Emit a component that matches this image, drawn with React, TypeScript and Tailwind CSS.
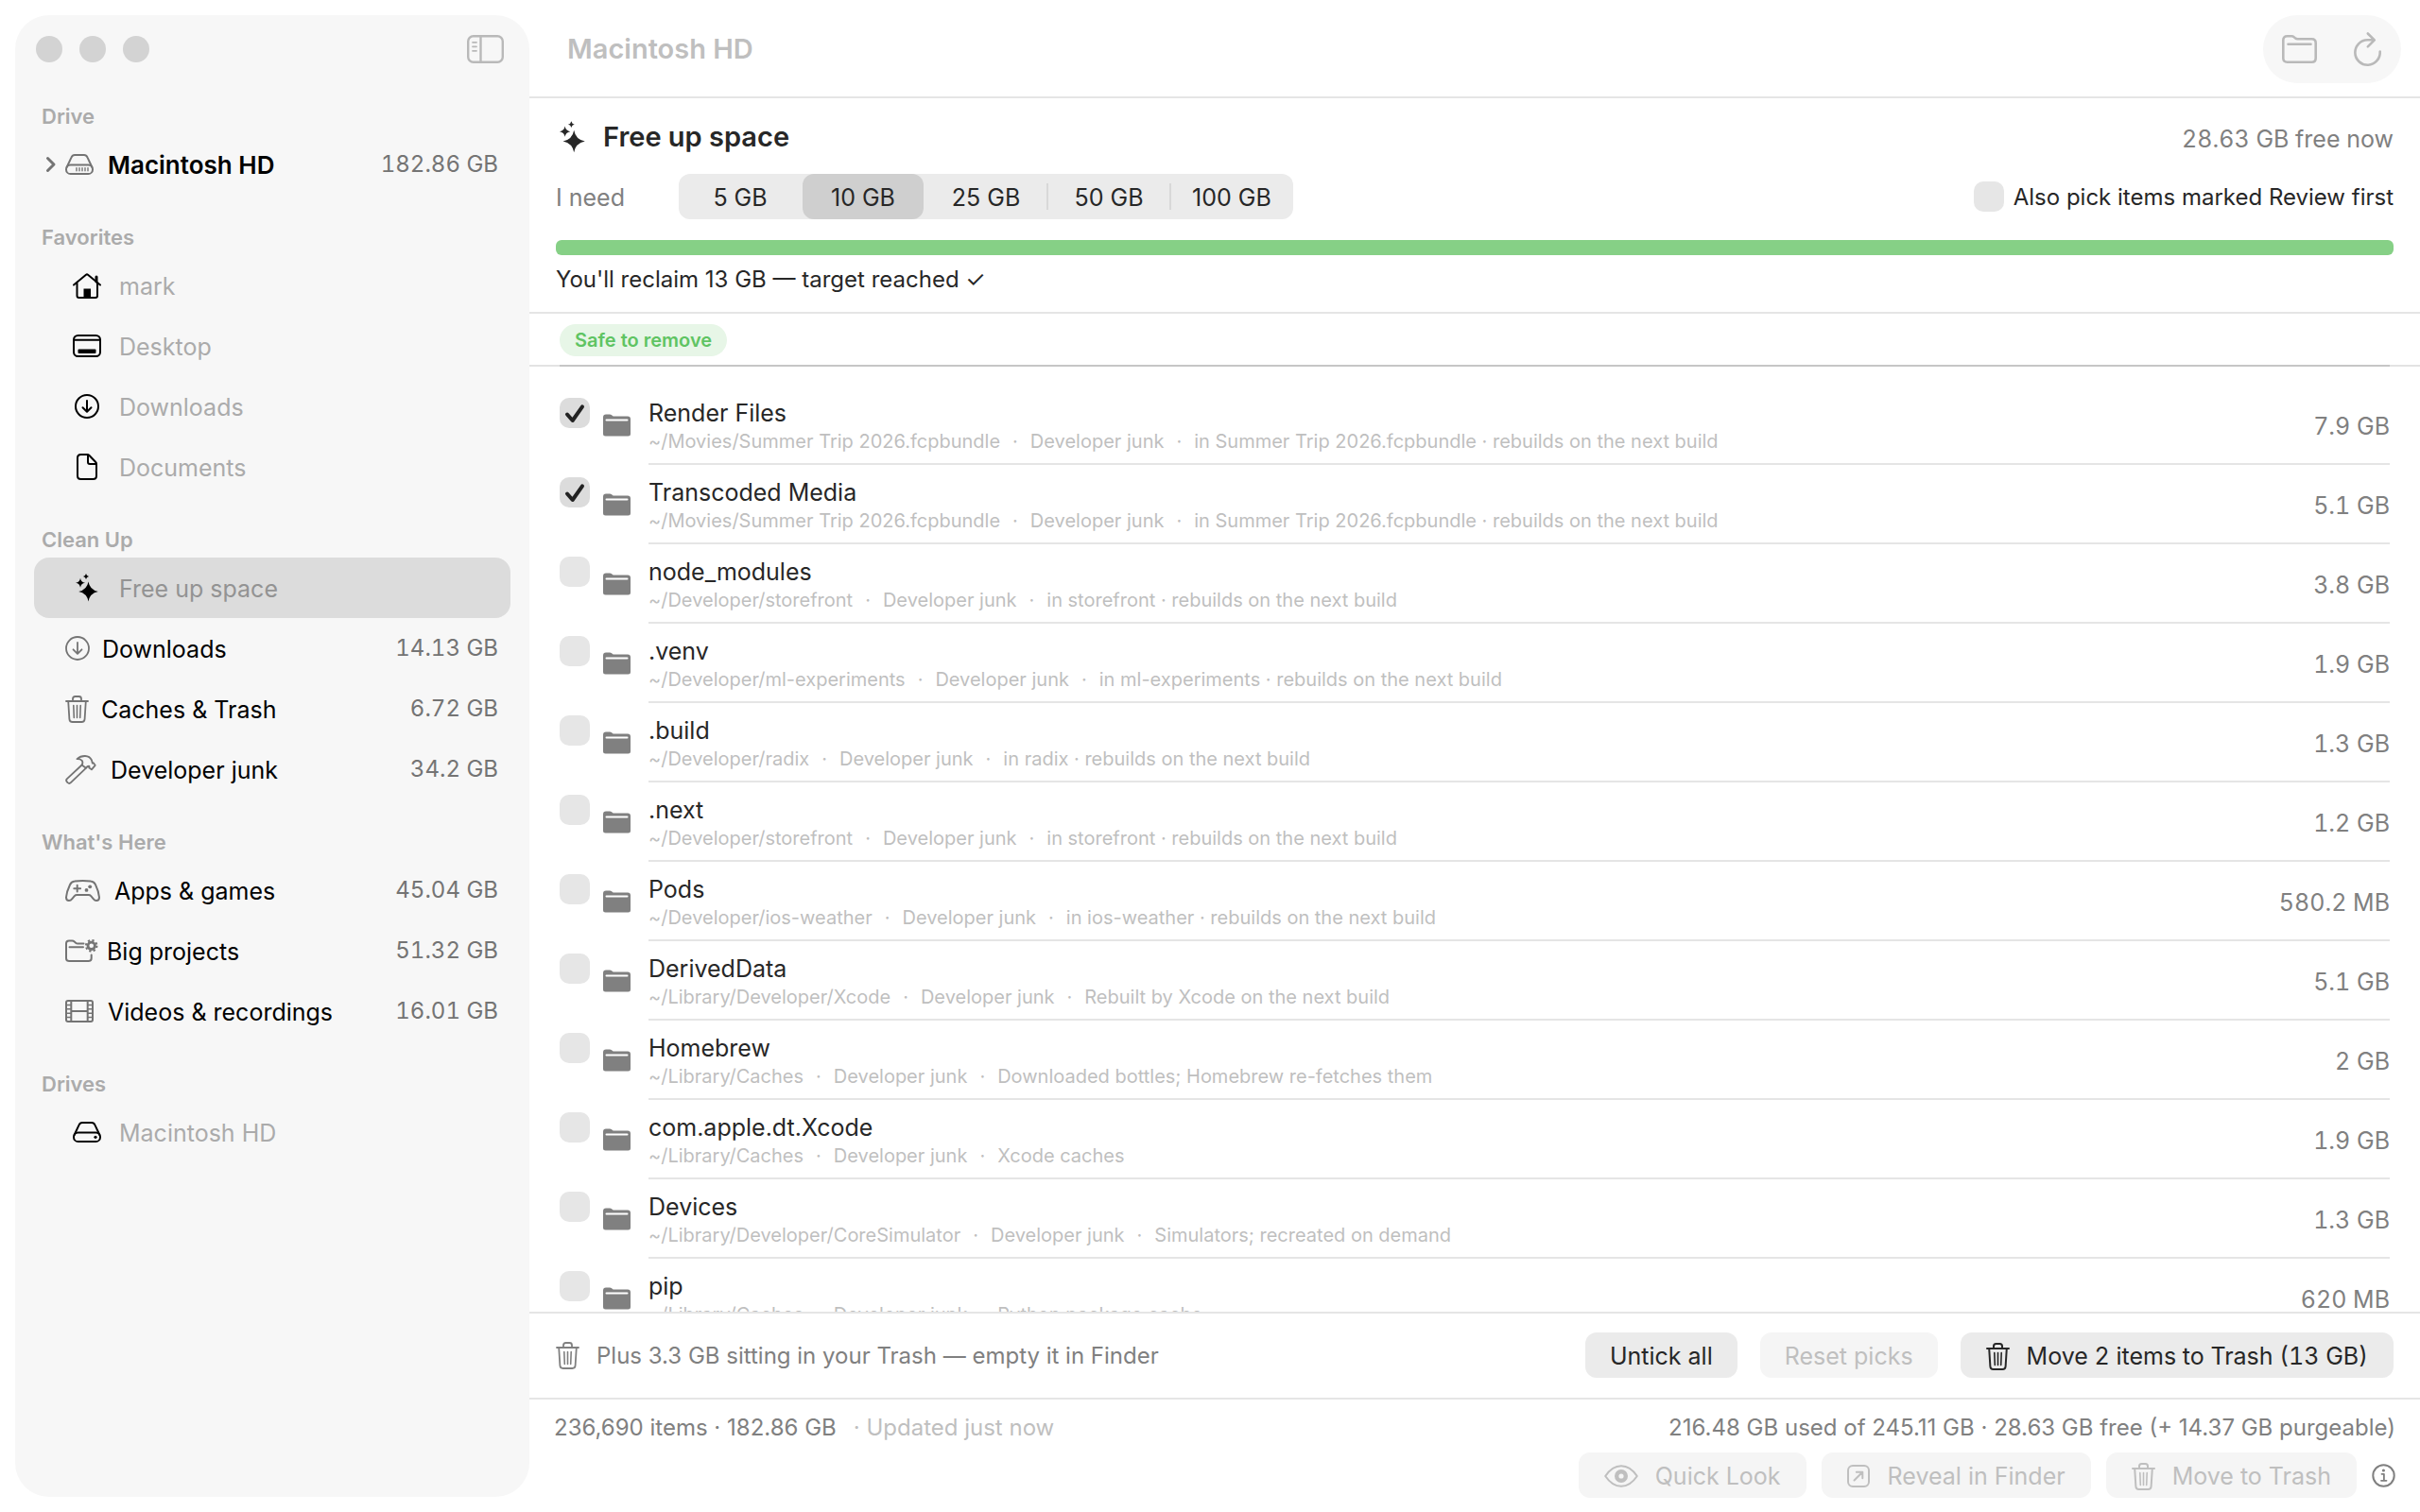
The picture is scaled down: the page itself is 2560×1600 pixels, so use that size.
import { useState } from 'react'
import type { ReactNode } from 'react'
import { clsx } from 'clsx'

type IconProps = { w: number; h: number; sw?: number; className?: string; children: ReactNode }

function Icon({ w, h, sw = 2, className, children }: IconProps) {
  return (
    <svg
      width={w}
      height={h}
      viewBox={`0 0 ${w} ${h}`}
      fill="none"
      stroke="currentColor"
      strokeWidth={sw}
      strokeLinecap="round"
      strokeLinejoin="round"
      aria-hidden="true"
      className={clsx('shrink-0 overflow-visible', className)}
    >
      {children}
    </svg>
  )
}

function DriveIcon({ w, vents = false }: { w: number; vents?: boolean }) {
  return (
    <Icon w={w} h={22}>
      <path d="M1.6 14 6.6 3.4Q7.6 1 10 1h10q2.400 0 3.400 2.400L28.400 14" />
      <rect x="1" y="11.500" width="28" height="9.500" rx="4.600" />
      {vents ? (
        <path d="M12 14.600v3.200M15 14.600v3.200M18 14.600v3.200M21 14.600v3.200M24 14.600v3.200" strokeWidth="1.400" />
      ) : (
        <circle cx="24" cy="16.300" r="1.600" fill="currentColor" stroke="none" />
      )}
    </Icon>
  )
}

function HouseIcon() {
  return (
    <Icon w={30} h={27}>
      <path d="M1 12.500 14 1.800q1-.8 2 0L29 12.500M4.500 10.500V24q0 2 2 2H24q2 0 2-2V10.500" />
      <path d="M25 4v5" strokeWidth="3" />
      <rect x="11.500" y="16.500" width="7.500" height="9.500" fill="currentColor" stroke="none" />
    </Icon>
  )
}

function DesktopIcon() {
  return (
    <Icon w={30} h={24}>
      <rect x="1" y="1" width="28" height="22" rx="4.500" />
      <path d="M1.500 5.800h27" />
      <rect x="5.500" y="15.500" width="19" height="4.500" rx="1" fill="currentColor" stroke="none" />
    </Icon>
  )
}

function DownloadIcon({ sw = 2 }: { sw?: number }) {
  return (
    <Icon w={26} h={26} sw={sw}>
      <circle cx="13" cy="13" r="12" />
      <path d="M13 7v11.500M8.500 14.300 13 18.800l4.500-4.500" />
    </Icon>
  )
}

function DocumentIcon() {
  return (
    <Icon w={22} h={28}>
      <path d="M1 4.500Q1 1 4.500 1h7q1 0 2 1l6.500 6.800q1 1 1 2.200v12.500q0 3.500-3.500 3.500h-13Q1 27 1 23.500zM12 1.500V9q0 2 2 2h6.500" />
    </Icon>
  )
}

function SparklesIcon({ w, h }: { w: number; h: number }) {
  return (
    <svg width={w} height={h} viewBox="0 0 24 30" fill="currentColor" aria-hidden="true" className="shrink-0">
      <path d="M13.500 8.500q1.400 8.600 10.300 10.500-8.900 1.900-10.300 10.500Q12.100 20.900 3.200 19q8.900-1.900 10.300-10.500z" />
      <path d="M5 4.800q.7 4.300 5 5-4.300.7-5 5-.7-4.300-5-5 4.300-.7 5-5zM11 0q.5 2.500 3 3-2.500.5-3 3-.5-2.500-3-3 2.500-.5 3-3z" />
    </svg>
  )
}

function TrashIcon({ sw = 2 }: { sw?: number }) {
  return (
    <Icon w={25} h={29} sw={sw}>
      <path d="M1 6h23M8 5.500V3.500Q8 1 10.500 1h4Q17 1 17 3.500v2M3.200 6l1.200 19q.2 3 3.200 3h9.800q3 0 3.200-3l1.200-19" />
      <path d="m8.800 10.500.5 13M12.500 10.500v13M16.200 10.500l-.5 13" strokeWidth="1.600" />
    </Icon>
  )
}

function HammerIcon() {
  return (
    <Icon w={35} h={31} sw={1.8}>
      <path d="M12.500 4.200Q16 .9 21 1q5 .2 7 4.500l.8 3.200 1-.5 1.900 2.600-3.800 4.500-2.600-1.700.2-1.800q-2-.3-3.600 2L17.600 10.500q1.600-2.400.1-4.700-1.700-1.800-5.200-1.600z" />
      <path d="M17.600 10.500 1.900 25.200q-1.600 1.600 0 3.300l.7.700q1.700 1.600 3.300 0L21.900 13.800" />
    </Icon>
  )
}

function GamepadIcon() {
  return (
    <Icon w={39} h={23}>
      <path d="M10 1.600q8.500-1.200 17 0 3.500.4 5 3.600 3.500 7.300 4 13.300 0 3.500-3 3.500-1.800 0-3.300-1.900l-2.500-3q-1-1.100-2.500-1.100H12.300q-1.500 0-2.500 1.100l-2.500 3Q5.800 22 4 22q-3 0-3-3.500.5-6 4-13.300 1.500-3.200 5-3.600z" />
      <path d="M12.700 5.800v6.800M9.300 9.200h6.800" />
      <g fill="currentColor" stroke="none">
        <circle cx="26.200" cy="7.300" r="1.900" />
        <circle cx="22.500" cy="10.900" r="1.900" />
      </g>
    </Icon>
  )
}

function FolderGearIcon() {
  return (
    <Icon w={31} h={24}>
      <path d="M19.500 4.500h-6.300q-1.200 0-2.100-.8l-1.400-1.300Q8.700 1.500 7.400 1.500H4q-3 0-3 3V20q0 3 3 3h20.700q3 0 3-3v-3.500M4.500 8.300h14.500" />
      <circle cx="27.700" cy="6.800" r="3.700" strokeWidth="2.800" />
      <circle cx="27.700" cy="6.800" r="5.700" strokeWidth="2.200" strokeDasharray="2.238" strokeLinecap="butt" />
    </Icon>
  )
}

function FilmIcon() {
  return (
    <Icon w={32} h={24}>
      <rect x="1" y="1" width="28" height="22" rx="2" />
      <path d="M6.300 1v22M23.700 1v22M6.300 12h17.400" />
      <path d="M1 5.500h5M1 9.800h5M1 14.200h5M1 18.500h5M24 5.500h5M24 9.800h5M24 14.200h5M24 18.500h5" strokeWidth="1.600" />
    </Icon>
  )
}

function FolderIcon() {
  return (
    <svg width="29" height="24" viewBox="0 0 29 24" aria-hidden="true" className="ml-[14px] shrink-0 text-[#808080]">
      <path
        d="M0 3.500Q0 .5 3 .5h4q1.200 0 2.100.8l.9.700q.6.500 1.500.5H26q3 0 3 3V21q0 2.500-2.500 2.500h-24Q0 23.500 0 21z"
        fill="currentColor"
      />
      <rect x="2.500" y="5.500" width="24" height="2" rx="1" fill="#fff" />
    </svg>
  )
}

type CheckboxProps = { id: string; checked: boolean; onChange: () => void; className?: string }

function Checkbox({ id, checked, onChange, className }: CheckboxProps) {
  return (
    <span className={clsx('grid size-8 shrink-0', className)}>
      <input
        id={id}
        type="checkbox"
        checked={checked}
        onChange={onChange}
        className="peer col-start-1 row-start-1 size-8 appearance-none rounded-[10px] bg-[#e6e6e6] checked:bg-[#dcdcdc]"
      />
      <svg
        viewBox="0 0 32 32"
        fill="none"
        stroke="#222"
        strokeWidth="4"
        strokeLinecap="round"
        strokeLinejoin="round"
        aria-hidden="true"
        className="pointer-events-none col-start-1 row-start-1 hidden size-8 peer-checked:block"
      >
        <path d="m8 17.500 5.700 6.500L24 9.300" />
      </svg>
    </span>
  )
}

const FAVORITES = [
  { label: 'mark', icon: <HouseIcon /> },
  { label: 'Desktop', icon: <DesktopIcon /> },
  { label: 'Downloads', icon: <DownloadIcon /> },
  { label: 'Documents', icon: <DocumentIcon /> },
]

const CLEAN_UP = [
  { label: 'Downloads', size: '14.13 GB', icon: <DownloadIcon sw={1.8} /> },
  { label: 'Caches & Trash', size: '6.72 GB', icon: <TrashIcon sw={1.8} /> },
  { label: 'Developer junk', size: '34.2 GB', icon: <HammerIcon /> },
]

const WHATS_HERE = [
  { label: 'Apps & games', size: '45.04 GB', icon: <GamepadIcon /> },
  { label: 'Big projects', size: '51.32 GB', icon: <FolderGearIcon /> },
  { label: 'Videos & recordings', size: '16.01 GB', icon: <FilmIcon /> },
]

const TARGETS = ['5 GB', '10 GB', '25 GB', '50 GB', '100 GB']

const REBUILDS = 'rebuilds on the next build'

const ITEMS = [
  { name: 'Render Files', path: '~/Movies/Summer Trip 2026.fcpbundle', note: `in Summer Trip 2026.fcpbundle · ${REBUILDS}`, size: '7.9 GB' },
  { name: 'Transcoded Media', path: '~/Movies/Summer Trip 2026.fcpbundle', note: `in Summer Trip 2026.fcpbundle · ${REBUILDS}`, size: '5.1 GB' },
  { name: 'node_modules', path: '~/Developer/storefront', note: `in storefront · ${REBUILDS}`, size: '3.8 GB' },
  { name: '.venv', path: '~/Developer/ml-experiments', note: `in ml-experiments · ${REBUILDS}`, size: '1.9 GB' },
  { name: '.build', path: '~/Developer/radix', note: `in radix · ${REBUILDS}`, size: '1.3 GB' },
  { name: '.next', path: '~/Developer/storefront', note: `in storefront · ${REBUILDS}`, size: '1.2 GB' },
  { name: 'Pods', path: '~/Developer/ios-weather', note: `in ios-weather · ${REBUILDS}`, size: '580.2 MB' },
  { name: 'DerivedData', path: '~/Library/Developer/Xcode', note: 'Rebuilt by Xcode on the next build', size: '5.1 GB' },
  { name: 'Homebrew', path: '~/Library/Caches', note: 'Downloaded bottles; Homebrew re-fetches them', size: '2 GB' },
  { name: 'com.apple.dt.Xcode', path: '~/Library/Caches', note: 'Xcode caches', size: '1.9 GB' },
  { name: 'Devices', path: '~/Library/Developer/CoreSimulator', note: 'Simulators; recreated on demand', size: '1.3 GB' },
  { name: 'pip', path: '~/Library/Caches', note: 'Python package cache', size: '620 MB' },
]

function SectionTitle({ children }: { children: ReactNode }) {
  return (
    <h2 className="flex h-16 items-end pb-[5px] pl-2 text-[22px] leading-7 font-semibold text-[#ababab]">{children}</h2>
  )
}

function PlaceRow({ label, icon, selected = false }: { label: string; icon: ReactNode; selected?: boolean }) {
  return (
    <a
      href="#"
      className={clsx(
        'flex h-16 items-center gap-[19px] rounded-2xl pl-[41px] text-black',
        selected && 'bg-[#dcdcdc]',
      )}
    >
      <span className="flex w-[30px] justify-center">{icon}</span>
      <span className={clsx('pt-0.5', selected ? 'text-[#939393]' : 'text-[#ababab]')}>{label}</span>
    </a>
  )
}

function CategoryRow({ label, icon, size }: { label: string; icon: ReactNode; size: string }) {
  return (
    <a href="#" className="flex h-16 items-center gap-[13px] pr-[13px] pl-[33px] text-[#747474]">
      {icon}
      <span className="pt-0.5 text-black">{label}</span>
      <span className="ml-auto text-[24px] tabular-nums">{size}</span>
    </a>
  )
}

function Sidebar() {
  return (
    <aside className="my-4 ml-4 w-[544px] shrink-0 rounded-[36px] bg-[#f7f7f7]">
      <div className="h-[62px] pt-[21px] pr-[27px] pl-[22px]">
        <div className="flex h-[30px] items-center gap-[18px]">
          <button aria-label="Close" className="size-7 rounded-full bg-[#d3d3d3]" />
          <button aria-label="Minimize" className="size-7 rounded-full bg-[#d3d3d3]" />
          <button aria-label="Zoom" className="size-7 rounded-full bg-[#d3d3d3]" />
          <button aria-label="Toggle sidebar" className="ml-auto text-[#b9b9b9]">
            <Icon w={39} h={30} sw={2.4}>
              <rect x="1.200" y="1.200" width="36.600" height="27.600" rx="5.500" />
              <path d="M14.500 1.500v27" />
              <path d="M6 7.800h4M6 12.300h4M6 16.800h4" strokeWidth="1.800" />
            </Icon>
          </button>
        </div>
      </div>

      <nav className="px-5">
        <SectionTitle>Drive</SectionTitle>
        <a href="#" className="flex h-16 items-center pr-[13px] pl-[13px] text-[#747474]">
          <Icon w={10} h={16} sw={3} className="mr-[10px]">
            <path d="m1.500 1.500 6.500 6.500-6.500 6.500" />
          </Icon>
          <DriveIcon w={32} vents />
          <span className="ml-[13px] pt-0.5 text-[26px] font-semibold text-black">Macintosh HD</span>
          <span className="ml-auto text-[24px] tabular-nums">182.86 GB</span>
        </a>

        <SectionTitle>Favorites</SectionTitle>
        {FAVORITES.map((f) => (
          <PlaceRow key={f.label} label={f.label} icon={f.icon} />
        ))}

        <SectionTitle>Clean Up</SectionTitle>
        <PlaceRow label="Free up space" icon={<SparklesIcon w={24} h={30} />} selected />
        {CLEAN_UP.map((c) => (
          <CategoryRow key={c.label} label={c.label} icon={c.icon} size={c.size} />
        ))}

        <SectionTitle>What's Here</SectionTitle>
        {WHATS_HERE.map((c) => (
          <CategoryRow key={c.label} label={c.label} icon={c.icon} size={c.size} />
        ))}

        <SectionTitle>Drives</SectionTitle>
        <PlaceRow label="Macintosh HD" icon={<DriveIcon w={30} />} />
      </nav>
    </aside>
  )
}

function Toolbar() {
  return (
    <header className="flex h-[104px] shrink-0 items-center justify-between border-b-2 border-[#e5e5e5] pt-0.5 pr-5 pl-10">
      <h1 className="text-[29px] font-semibold text-[#bfbfbf]">Macintosh HD</h1>
      <div className="flex h-[72px] items-center gap-[39px] rounded-full bg-[#f7f7f7] px-5 text-[#b9b9b9]">
        <button aria-label="Open folder">
          <Icon w={37} h={30} sw={2.6}>
            <path d="M1.300 5.500q0-4.200 4.200-4.200h4.600q1.600 0 2.800 1.100l1 .9q1.200 1 2.800 1h14.800q4.200 0 4.200 4.200v16q0 4.200-4.200 4.200h-26q-4.200 0-4.200-4.200zM6.500 9.700h24" />
          </Icon>
        </button>
        <button aria-label="Rescan">
          <Icon w={30} h={36} sw={2.6}>
            <path d="M27.700 20.500A13.200 13.200 0 1 1 14.500 8.300h7M14.800 1.500l7 6.900-7 7" />
          </Icon>
        </button>
      </div>
    </header>
  )
}

function TargetPicker() {
  const [target, setTarget] = useState('10 GB')
  const [review, setReview] = useState(false)
  const selectedIndex = TARGETS.indexOf(target)

  return (
    <section className="border-b-2 border-[#e5e5e5] px-7 pt-[23px] pb-[18px]">
      <div className="flex items-center gap-[19px] pl-1">
        <SparklesIcon w={27} h={34} />
        <h2 className="text-[29px] leading-9 font-semibold">Free up space</h2>
        <span className="mt-1 ml-auto tabular-nums text-[#808080]">28.63 GB free now</span>
      </div>

      <div className="mt-[21px] flex h-12 items-center">
        <span className="w-[130px] pt-0.5 text-[#808080]">I need</span>
        <div role="group" aria-label="I need" className="flex items-center rounded-xl bg-[#ebebeb] px-px">
          {TARGETS.map((t, i) => (
            <div key={t} className="flex items-center">
              {i > 0 && (
                <span
                  className={clsx(
                    'h-7 w-[2px]',
                    i !== selectedIndex && i !== selectedIndex + 1 && 'bg-[#d8d8d8]',
                  )}
                />
              )}
              <button
                aria-pressed={t === target}
                onClick={() => setTarget(t)}
                className={clsx('h-12 w-32 rounded-xl pt-0.5', t === target && 'bg-[#cfcfcf]')}
              >
                {t}
              </button>
            </div>
          ))}
        </div>
        <div className="ml-auto flex items-center gap-[10px]">
          <Checkbox id="review" checked={review} onChange={() => setReview(!review)} />
          <label htmlFor="review" className="pt-0.5 text-[24px]">
            Also pick items marked Review first
          </label>
        </div>
      </div>

      <div className="mt-[22px] h-4 rounded-md bg-[#86d086]" />
      <p className="mt-[10px] text-[24px] leading-8">You'll reclaim 13 GB — target reached ✓</p>
    </section>
  )
}

function ItemList() {
  const [picked, setPicked] = useState<string[]>(['Render Files', 'Transcoded Media'])

  function toggle(name: string) {
    setPicked((p) => (p.includes(name) ? p.filter((n) => n !== name) : [...p, name]))
  }

  return (
    <>
      <div className="shrink-0 border-b-2 border-[#e3e3e3]">
        <div className="mx-8 -mb-[2px] flex h-14 items-center border-b-2 border-[#c6c6c6] pt-0.5">
          <h3 className="rounded-full bg-[#e7f6e7] px-4 text-[20px] leading-[34px] font-semibold text-[#5fc463]">
            Safe to remove
          </h3>
        </div>
      </div>
      <ul className="min-h-0 flex-1 overflow-hidden px-8 pt-5">
        {ITEMS.map((item) => (
          <li key={item.name} className="flex h-[84px] items-center">
            <Checkbox
              id={item.name}
              checked={picked.includes(item.name)}
              onChange={() => toggle(item.name)}
              className="mt-[13px] self-start"
            />
            <FolderIcon />
            <div className="ml-[19px] flex h-full flex-1 items-center justify-between border-b-2 border-[#e5e5e5] pt-[3px]">
              <div>
                <label htmlFor={item.name} className="block leading-8">
                  {item.name}
                </label>
                <p className="flex gap-[13px] text-[20px] leading-7 text-[#bfbfbf]">
                  <span>{item.path}</span>
                  <span>·</span>
                  <span>Developer junk</span>
                  <span>·</span>
                  <span>{item.note}</span>
                </p>
              </div>
              <span className="tabular-nums text-[#808080]">{item.size}</span>
            </div>
          </li>
        ))}
      </ul>
    </>
  )
}

function ActionBar() {
  return (
    <div className="flex shrink-0 items-center gap-6 border-t-2 border-[#e5e5e5] px-7 pt-5 pb-[21px]">
      <div className="mr-auto flex items-center gap-[18px] text-[24px] text-[#808080]">
        <TrashIcon sw={1.8} />
        <span className="pt-0.5">Plus 3.3 GB sitting in your Trash — empty it in Finder</span>
      </div>
      <button className="h-12 rounded-xl bg-[#ebebeb] px-[26px] pt-0.5">Untick all</button>
      <button disabled className="h-12 rounded-xl bg-[#f5f5f5] px-[26px] pt-0.5 text-[#bfbfbf]">
        Reset picks
      </button>
      <button className="flex h-12 items-center gap-[18px] rounded-xl bg-[#ebebeb] px-[27px] pt-0.5">
        <TrashIcon />
        <span className="tabular-nums">Move 2 items to Trash (13 GB)</span>
      </button>
    </div>
  )
}

function StatusBar() {
  return (
    <footer className="shrink-0 border-t-2 border-[#e5e5e5] px-[26px] pt-[14px] pb-[15px] text-[#808080]">
      <div className="flex text-[24px] leading-8">
        <span>236,690 items · 182.86 GB</span>
        <span className="ml-[18px] text-[#bfbfbf]">· Updated just now</span>
        <span className="ml-auto">216.48 GB used of 245.11 GB · 28.63 GB free (+ 14.37 GB purgeable)</span>
      </div>
      <div className="mt-[10px] flex items-center justify-end gap-4">
        <button disabled className="flex h-12 items-center gap-[18px] rounded-xl bg-[#f5f5f5] px-[27px] pt-0.5 text-[#bfbfbf]">
          <Icon w={36} h={24}>
            <path d="M1.200 12Q8.500 1.200 18 1.200T34.800 12Q27.500 22.800 18 22.800T1.200 12z" />
            <circle cx="18" cy="12" r="4.800" strokeWidth="4.400" />
          </Icon>
          Quick Look
        </button>
        <button disabled className="flex h-12 items-center gap-[18px] rounded-xl bg-[#f5f5f5] px-[27px] pt-0.5 text-[#bfbfbf]">
          <Icon w={25} h={24}>
            <rect x="1" y="1" width="22" height="22" rx="5" />
            <path d="M7.500 16.500 16 8M9.800 7.700h6.500v6.500" />
          </Icon>
          Reveal in Finder
        </button>
        <button disabled className="flex h-12 items-center gap-[18px] rounded-xl bg-[#f5f5f5] px-[27px] pt-0.5 text-[#bfbfbf]">
          <TrashIcon />
          Move to Trash
        </button>
        <button aria-label="Info">
          <Icon w={25} h={25}>
            <circle cx="12.500" cy="12.500" r="11.200" />
            <path d="M10.500 10.800h2.400v6.700M10 17.800h5.500" strokeWidth="1.800" />
            <circle cx="12.400" cy="7" r="1.600" fill="currentColor" stroke="none" />
          </Icon>
        </button>
      </div>
    </footer>
  )
}

export default function App() {
  return (
    <div className="flex h-screen bg-white font-['Inter','DejaVu_Sans',sans-serif] text-[25px] leading-8 text-[#272727]">
      <Sidebar />
      <main className="flex min-w-0 flex-1 flex-col">
        <Toolbar />
        <TargetPicker />
        <ItemList />
        <ActionBar />
        <StatusBar />
      </main>
    </div>
  )
}
